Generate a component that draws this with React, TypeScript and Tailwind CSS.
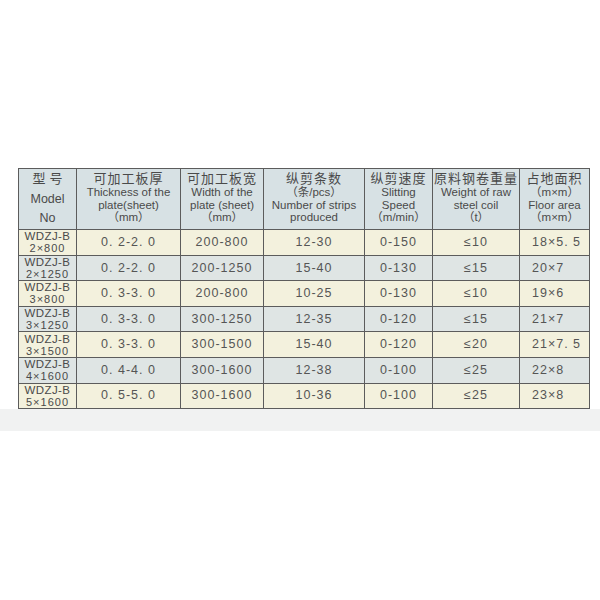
const headers: { zh: string; lines: string[] }[] = [
  { zh: '可加工板厚', lines: ['Thickness of the', 'plate(sheet)', '（mm）'] },
  { zh: '可加工板宽', lines: ['Width of the', 'plate (sheet)', '（mm）'] },
  { zh: '纵剪条数', lines: ['（条/pcs）', 'Number of strips', 'produced'] },
  { zh: '纵剪速度', lines: ['Slitting', 'Speed', '（m/min）'] },
  { zh: '原料钢卷重量', lines: ['Weight of raw', 'steel coil', '（t）'] },
  { zh: '占地面积', lines: ['（m×m）', 'Floor area', '（m×m）'] },
];

const rows = [
  { size: '2×800', data: ['0. 2-2. 0', '200-800', '12-30', '0-150', '≤10', '18×5. 5'] },
  { size: '2×1250', data: ['0. 2-2. 0', '200-1250', '15-40', '0-130', '≤15', '20×7'] },
  { size: '3×800', data: ['0. 3-3. 0', '200-800', '10-25', '0-130', '≤10', '19×6'] },
  { size: '3×1250', data: ['0. 3-3. 0', '300-1250', '12-35', '0-120', '≤15', '21×7'] },
  { size: '3×1500', data: ['0. 3-3. 0', '300-1500', '15-40', '0-120', '≤20', '21×7. 5'] },
  { size: '4×1600', data: ['0. 4-4. 0', '300-1600', '12-38', '0-100', '≤25', '22×8'] },
  { size: '5×1600', data: ['0. 5-5. 0', '300-1600', '10-36', '0-100', '≤25', '23×8'] },
];

const App = () => {
  return (
    <div className="w-[600px] h-[600px] bg-white font-['Liberation_Sans','Noto_Sans_CJK_SC',sans-serif]">
      <div className="pt-[168px] pl-[18px]">
        <div className="w-fit grid grid-cols-[57px_103px_82px_100px_67px_86px_69px] gap-px bg-[#5c5c5c] border border-[#5c5c5c]">
          {/* header */}
          <div className="h-[60px] bg-[#d7e1e4] flex flex-col items-center justify-between pt-[2px] pb-[3px] text-[#4a4a4a]">
            <span className="text-[13px] leading-[16px] tracking-[4px] pl-[4px]">型号</span>
            <span className="text-[12.5px] leading-[16px]">Model</span>
            <span className="text-[12.5px] leading-[16px]">No</span>
          </div>
          {headers.map((h, i) => (
            <div key={i} className="h-[60px] bg-[#d7e1e4] flex flex-col items-center pt-[3px] text-[#4a4a4a]">
              <span className="text-[13px] leading-[14px] tracking-[1px]">{h.zh}</span>
              {h.lines.map((l, j) => (
                <span key={j} className="text-[11.5px] leading-[12.5px] whitespace-nowrap">
                  {l}
                </span>
              ))}
            </div>
          ))}

          {/* body */}
          {rows.map((r, i) => {
            const bg = i % 2 === 0 ? 'bg-[#f3f1dd]' : 'bg-[#dfe5e4]';
            return [
              <div key={`m${i}`} className={`h-[24.6px] ${bg} flex flex-col items-center justify-center text-[#4a4a4a]`}>
                <span className="text-[11.5px] leading-[12px] tracking-[0.4px]">WDZJ-B</span>
                <span className="text-[11px] leading-[12px] tracking-[1px]">{r.size}</span>
              </div>,
              ...r.data.map((d, j) => (
                <div
                  key={`d${i}-${j}`}
                  className={`h-[24.6px] ${bg} flex items-center ${j === 5 ? 'justify-start pl-[12px]' : 'justify-center'} text-[12.5px] tracking-[1px] text-[#555] whitespace-pre`}
                >
                  {d}
                </div>
              )),
            ];
          })}
        </div>
      </div>
      <div className="h-[22px] bg-[#f1f2f2]" />
    </div>
  );
};

export default App;
